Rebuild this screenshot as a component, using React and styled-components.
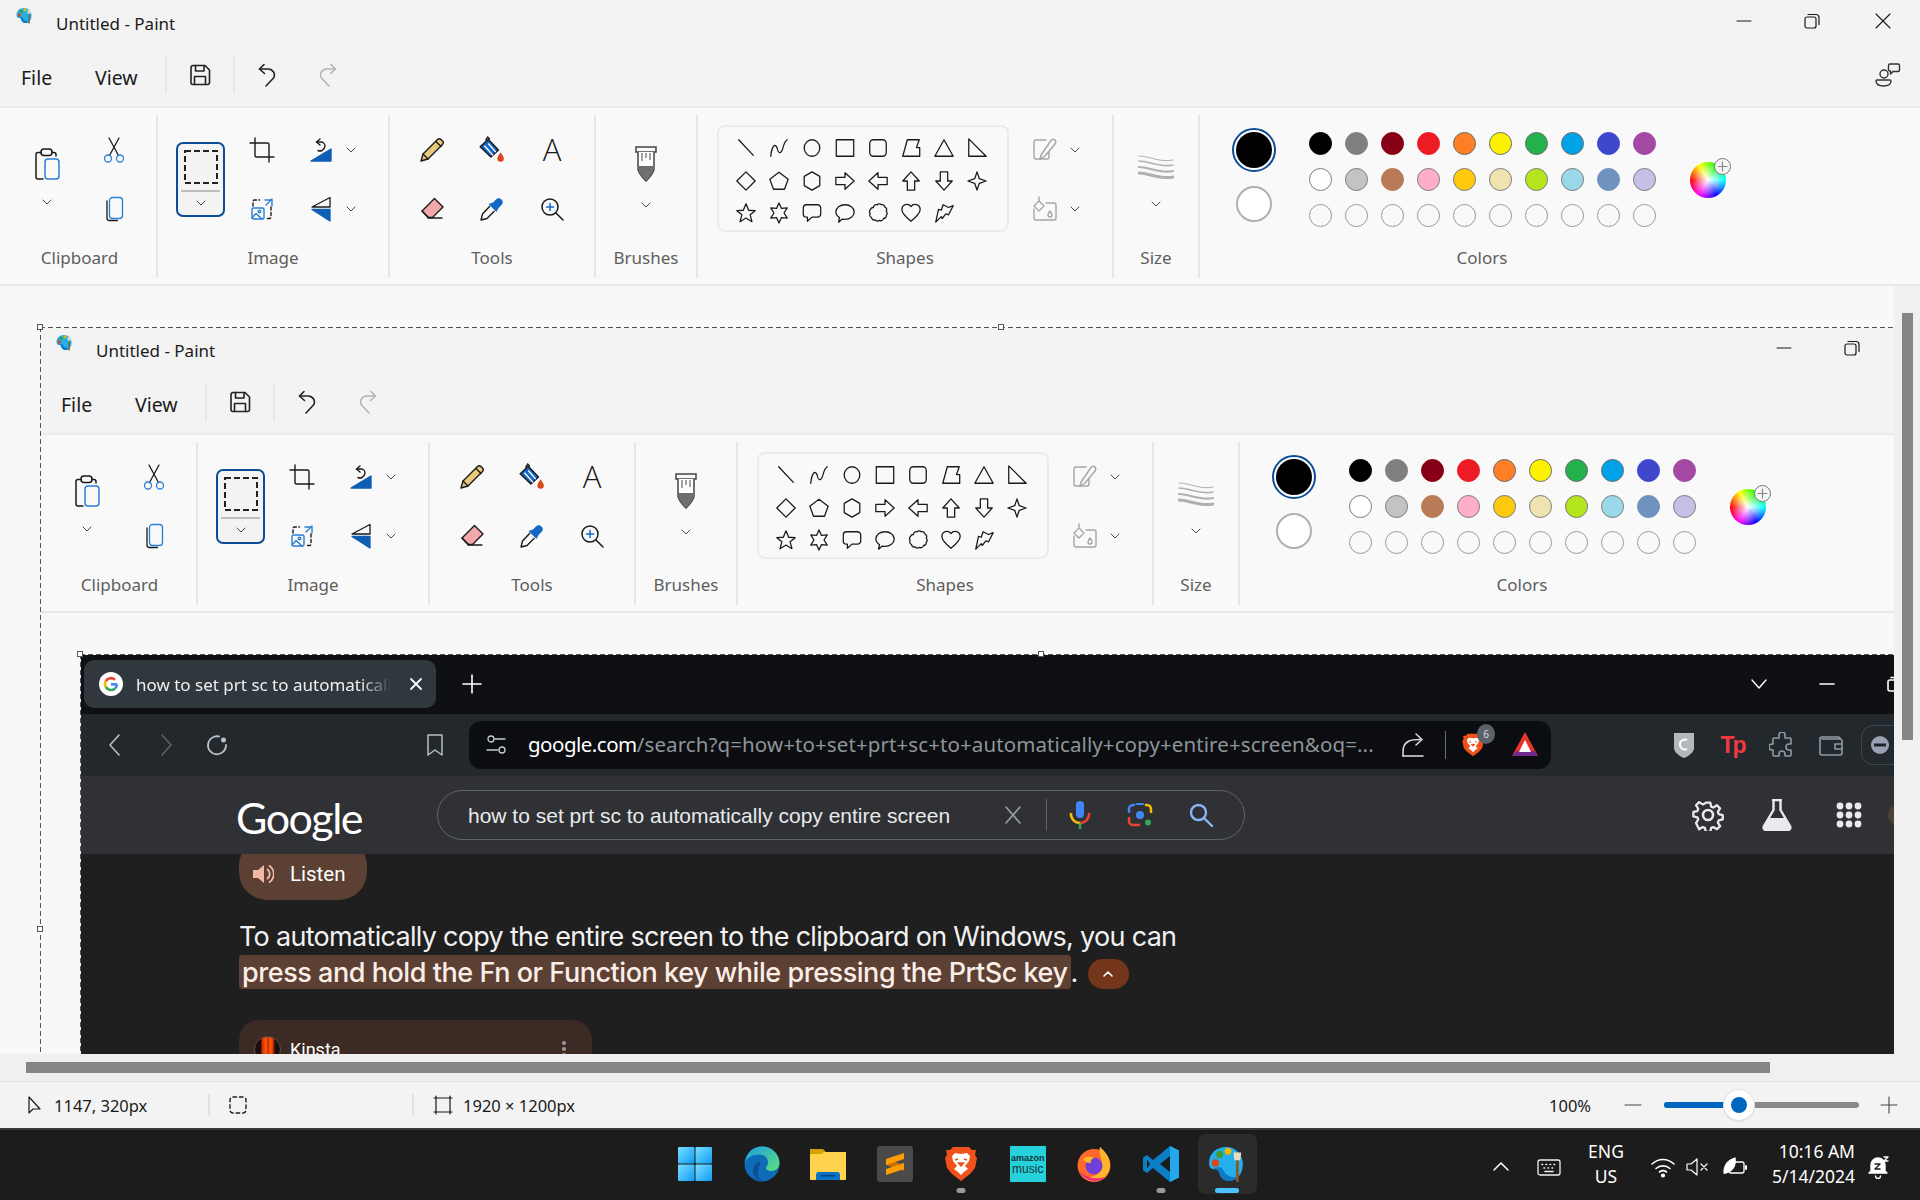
import React from "react";
import styled, { createGlobalStyle } from "styled-components";

const UI_FONT = `"Noto Sans", "Open Sans", sans-serif`;

const Global = createGlobalStyle`
  html, body {
    margin: 0;
    padding: 0;
    background: #f3f3f3;
    font-family: ${UI_FONT};
  }
  * { box-sizing: border-box; }
`;

const Page = styled.div`
  width: 1920px;
  height: 1200px;
  overflow: hidden;
  display: flex;
  flex-direction: column;
  background: #f3f3f3;
`;

/* ---------- paint chrome ---------- */

const ChromeWrap = styled.div`
  width: 1920px;
  height: 286px;
  flex: none;
  background: #f3f3f3;
`;

const TitleBar = styled.div`
  height: 46px;
  display: flex;
  align-items: center;
  padding-left: 16px;
`;

const TitleIcon = styled.div`
  width: 40px;
  height: 46px;
  padding-top: 7px;
`;

const TitleText = styled.span`
  font-size: 17px;
  color: #1a1a1a;
`;

const WindowButtons = styled.div`
  margin-left: auto;
  display: flex;
  height: 42px;
  align-self: flex-start;
`;

const WindowButton = styled.div`
  width: ${(p) => p.$w}px;
  display: flex;
  align-items: center;
  justify-content: center;
`;

const MenuBar = styled.div`
  height: 62px;
  display: flex;
  align-items: center;
  padding: 0 19px 0 21px;
`;

const MenuCell = styled.div`
  width: ${(p) => p.$w}px;
  font-size: 19.5px;
  color: #1a1a1a;
  display: flex;
  align-items: center;
  justify-content: ${(p) => (p.$text ? "flex-start" : "center")};
  margin-bottom: ${(p) => (p.$text ? 0 : 5)}px;
`;

const MenuSep = styled.div`
  width: 2px;
  height: 36px;
  margin-bottom: 4px;
  background: #e6e6e6;
`;

const CollabButton = styled.div`
  margin-left: auto;
  height: 26px;
  margin-bottom: 6px;
`;

const Ribbon = styled.div`
  height: 180px;
  display: flex;
  padding-top: 7px;
  background: #f9f9f9;
  border-top: 2px solid #ebebeb;
  border-bottom: 2px solid #e8e8e8;
  margin-top: -2px;
`;

const Group = styled.div`
  width: ${(p) => p.$w}px;
  height: 163px;
  display: flex;
  flex-direction: column;
  flex: none;
  border-right: ${(p) => (p.$last ? "none" : "2px solid #e6e6e6")};
`;

const GroupBody = styled.div`
  height: 124px;
  display: flex;
  gap: ${(p) => p.$gap || 0}px;
  padding: ${(p) => p.$top ?? 5}px 0 0 ${(p) => p.$left || 0}px;
  justify-content: ${(p) => p.$justify || "flex-start"};
`;

const GroupLabel = styled.div`
  text-align: center;
  font-size: 17px;
  line-height: 38px;
  color: #5e5e5e;
  padding-left: ${(p) => p.$nudge || 0}px;
`;

const ToolColumn = styled.div`
  width: 44px;
  display: flex;
  flex-direction: column;
`;

const ToolCell = styled.div`
  width: 44px;
  height: 59px;
  display: flex;
  align-items: center;
  justify-content: center;
`;

const ToolLetter = styled.span`
  font-family: "Open Sans", sans-serif;
  font-weight: 300;
  font-size: 31px;
  color: #1a1a1a;
  line-height: 1;
`;

const CaretRow = styled.div`
  height: 59px;
  display: flex;
  align-items: center;
  gap: 2px;
  margin-top: ${(p) => p.$lift || 0}px;
`;

const TallTool = styled.div`
  width: 44px;
  display: flex;
  flex-direction: column;
  align-items: center;
  padding-top: ${(p) => p.$pad || 28}px;
  gap: ${(p) => p.$gap || 16}px;
`;

const SelectButton = styled.div`
  width: 49px;
  height: 75px;
  margin-top: 22px;
  border: 2px solid #0b4d96;
  border-radius: 7px;
  background: #f3f3f3;
  display: flex;
  flex-direction: column;
  align-items: center;
`;

const SelectPreview = styled.div`
  height: 48px;
  display: flex;
  align-items: center;
  justify-content: center;
  border-bottom: 2px solid #bdbdbd;
  margin: 0 4px;
  width: 39px;
`;

const SelectCaret = styled.div`
  height: 22px;
  display: flex;
  align-items: center;
`;

const ShapeBox = styled.div`
  width: 292px;
  height: 107px;
  border: 2px solid #ececec;
  border-radius: 8px;
  padding: 5px 0 0 10px;
  display: grid;
  grid-template-columns: repeat(8, 33px);
  grid-auto-rows: 32.5px;
  align-items: center;
  justify-items: center;
`;

const ColorStack = styled.div`
  width: 44px;
  display: flex;
  flex-direction: column;
  align-items: center;
  gap: 14px;
  padding-top: 3px;
`;

const ActiveColor = styled.div`
  width: 44px;
  height: 44px;
  border-radius: 50%;
  border: 2px solid #0b4d96;
  padding: 2px;
  background: #fff;
  &::after {
    content: "";
    display: block;
    width: 100%;
    height: 100%;
    border-radius: 50%;
    background: #000;
  }
`;

const SecondColor = styled.div`
  width: 36px;
  height: 36px;
  border-radius: 50%;
  background: #fff;
  border: 2px solid #b0b0b0;
`;

const Palette = styled.div`
  display: grid;
  grid-template-columns: repeat(10, 36px);
  grid-auto-rows: 36px;
  align-items: center;
  justify-items: center;
`;

const Swatch = styled.div`
  width: 23px;
  height: 23px;
  border-radius: 50%;
  background: ${(p) => p.$c || "transparent"};
  border: 1.5px solid ${(p) => p.$ring || p.$c || "#999"};
`;

const ColorWheel = styled.div`
  position: relative;
  width: 36px;
  height: 36px;
  margin: 37px 0 0 2px;
  border-radius: 50%;
  background: radial-gradient(circle, #fff 0, rgba(255, 255, 255, 0) 68%),
    conic-gradient(from 270deg, #f00, #ff0, #0f0, #0ff, #00f, #f0f, #f00);
`;

const WheelPlus = styled.div`
  position: absolute;
  top: -4px;
  right: -5px;
  width: 17px;
  height: 17px;
  border-radius: 50%;
  background: #f5f5f5;
  border: 1.5px solid #777;
  display: flex;
  align-items: center;
  justify-content: center;
`;

/* ---------- canvas nesting ---------- */

const MainGrid = styled.div`
  height: 795px;
  flex: none;
  display: grid;
  grid-template-columns: 1894px 26px;
  grid-template-rows: 768px 27px;
  background: #f0f0f0;
`;

const Viewport = styled.div`
  overflow: hidden;
  background: #f8f8f8;
`;

const Workspace = styled.div`
  padding: 41px 0 0 40px;
  background: #f8f8f8;
`;

const Canvas = styled.div`
  position: relative;
  width: 1920px;
  background: #f8f8f8;
  &::before {
    content: "";
    position: absolute;
    inset: 0;
    z-index: 2;
    pointer-events: none;
    background:
      repeating-linear-gradient(90deg, #555 0 5px, #fff 5px 8px) top / 100% 1px no-repeat,
      repeating-linear-gradient(180deg, #555 0 5px, #fff 5px 8px) left / 1px 100% no-repeat;
  }
`;

const Handle = styled.div`
  position: absolute;
  z-index: 3;
  width: 6px;
  height: 6px;
  background: #fff;
  border: 1px solid #555;
  top: ${(p) => (p.$at === "left" ? 599 : -3)}px;
  left: ${(p) => (p.$at === "top" ? 958 : -3)}px;
`;

const VTrack = styled.div`
  padding: 27px 0 0 8px;
`;

const VThumb = styled.div`
  width: 11px;
  height: 427px;
  background: #868686;
`;

const HTrack = styled.div`
  padding: 8px 0 0 26px;
`;

const HThumb = styled.div`
  width: 1744px;
  height: 11px;
  background: #868686;
`;

/* ---------- browser screenshot ---------- */

const Browser = styled.div`
  width: 1920px;
  height: 546px;
  background: #1f1f1f;
  display: flex;
  flex-direction: column;
`;

const TabStrip = styled.div`
  height: 60px;
  flex: none;
  background: #0f1014;
  display: flex;
  align-items: center;
  padding: 0 71px 0 4px;
  color: #fff;
`;

const Tab = styled.div`
  width: 352px;
  height: 48px;
  border-radius: 10px;
  background: #30373d;
  display: flex;
  align-items: center;
  padding-left: 15px;
  flex: none;
`;

const TabTitle = styled.span`
  width: 255px;
  margin-left: 13px;
  font-size: 17px;
  color: #eef0f1;
  white-space: nowrap;
  overflow: hidden;
  mask-image: linear-gradient(90deg, #000 88%, transparent 100%);
`;

const TabClose = styled.div`
  margin-left: 18px;
  display: flex;
`;

const NewTab = styled.div`
  margin-left: 26px;
  display: flex;
`;

const StripRight = styled.div`
  margin-left: auto;
  display: flex;
`;

const StripCell = styled.div`
  width: 68px;
  display: flex;
  justify-content: center;
`;

const Toolbar = styled.div`
  height: 62px;
  flex: none;
  background: #23282c;
  display: flex;
  align-items: center;
  padding-left: 9px;
`;

const NavCell = styled.div`
  width: ${(p) => p.$w || 51}px;
  margin-left: ${(p) => p.$ml || 0}px;
  display: flex;
  justify-content: center;
  flex: none;
`;

const UrlPill = styled.div`
  width: 1082px;
  height: 48px;
  margin-left: 14px;
  flex: none;
  border-radius: 12px;
  background: #0c0d10;
  display: flex;
  align-items: center;
  padding-left: 15px;
`;

const UrlText = styled.div`
  width: 850px;
  margin-left: 20px;
  font-size: 20.5px;
  line-height: 26px;
  margin-bottom: 2px;
  letter-spacing: 0.1px;
  white-space: nowrap;
  color: #8e959b;
  flex: none;
`;

const UrlHost = styled.span`
  color: #fff;
  letter-spacing: -0.5px;
`;

const PillItem = styled.div`
  position: relative;
  margin-left: ${(p) => p.$ml}px;
  display: flex;
  flex: none;
`;

const PillSep = styled.div`
  width: 1px;
  height: 28px;
  margin-left: 18px;
  background: #6a6f74;
`;

const BraveBadge = styled.div`
  position: absolute;
  top: -9px;
  right: -10px;
  width: 18px;
  height: 20px;
  border-radius: 50%;
  background: #5d6169;
  color: #d8dade;
  font-size: 10px;
  display: flex;
  align-items: center;
  justify-content: center;
`;

const TpMark = styled.span`
  font-family: "Liberation Sans", sans-serif;
  font-weight: 700;
  font-size: 23px;
  letter-spacing: -2px;
  color: #ef3b3f;
  line-height: 1;
`;

const ProfilePill = styled.div`
  width: 80px;
  height: 40px;
  margin-left: 6px;
  flex: none;
  border: 1.5px solid #3b454d;
  border-radius: 12px;
  display: flex;
  align-items: center;
  padding-left: 9px;
  gap: 6px;
`;

const GoogleBar = styled.div`
  height: 78px;
  flex: none;
  background: #303134;
  display: flex;
  align-items: center;
  padding-left: 156px;
`;

const GoogleLogo = styled.div`
  width: 126px;
  flex: none;
  font-family: Lato, sans-serif;
  font-size: 43px;
  line-height: 1;
  letter-spacing: -1.5px;
  color: #fff;
  margin-top: 4px;
`;

const SearchPill = styled.div`
  width: 808px;
  height: 50px;
  margin-left: 75px;
  flex: none;
  border: 1px solid #5f6368;
  border-radius: 25px;
  display: flex;
  align-items: center;
  padding-left: 30px;
`;

const SearchText = styled.div`
  width: 512px;
  flex: none;
  padding-top: 2px;
  font-family: "Liberation Sans", sans-serif;
  font-size: 21px;
  color: #e8eaed;
  white-space: nowrap;
`;

const SearchSlot = styled.div`
  width: ${(p) => p.$w}px;
  display: flex;
  justify-content: center;
  flex: none;
`;

const SearchSep = styled.div`
  width: 1px;
  height: 32px;
  background: #5f6368;
`;

const BarCell = styled.div`
  width: ${(p) => p.$w}px;
  margin-left: ${(p) => p.$ml || 0}px;
  display: flex;
  justify-content: center;
  flex: none;
`;

const Avatar = styled.div`
  width: 20px;
  height: 20px;
  margin-left: 6px;
  flex: none;
  border-radius: 50%;
  background: #4a4334;
`;

const ResultBody = styled.div`
  flex: 1;
  overflow: hidden;
  background: #1f1f1f;
  padding-left: 159px;
`;

const ListenPill = styled.div`
  width: 128px;
  height: 62px;
  margin-top: -16px;
  border-radius: 28px;
  background: #5c4033;
  display: flex;
  align-items: center;
  padding: 10px 0 0 13px;
  gap: 16px;
  font-family: Roboto, sans-serif;
  font-size: 20.5px;
  color: #fff;
`;

const Answer = styled.div`
  margin-top: 19px;
  font-family: Inter, sans-serif;
  font-size: 27px;
  letter-spacing: -0.7px;
  line-height: 36px;
  color: #f1f1f1;
  white-space: nowrap;
`;

const AnswerLine = styled.div`
  display: flex;
  align-items: flex-start;
`;

const Mark = styled.span`
  height: 34px;
  line-height: 36px;
  padding: 0 3px;
  border-radius: 3px;
  background: #5c4033;
  color: #fbeee8;
  font-weight: 500;
  letter-spacing: -0.45px;
`;

const CollapsePill = styled.div`
  width: 41px;
  height: 30px;
  margin: 4px 0 0 10px;
  border-radius: 15px;
  background: #74361a;
  display: flex;
  align-items: center;
  justify-content: center;
`;

const SourceCard = styled.div`
  width: 353px;
  height: 100px;
  margin-top: 29px;
  border-radius: 20px;
  background: #3c2b25;
  display: flex;
  align-items: flex-start;
  padding: 16px 26px 0 15px;
  gap: 9px;
  font-family: Roboto, sans-serif;
  font-size: 18px;
  line-height: 28px;
  color: #fff;
`;

const KinstaDot = styled.div`
  width: 27px;
  height: 27px;
  border-radius: 50%;
  border: 1px solid #5a4a42;
  background: linear-gradient(90deg, #1c0f0c 22%, #d8300a 30%, #ff5a00 45%, #c2260a 52%, #ff5a00 62%, #d8300a 72%, #1c0f0c 80%);
`;

const MoreDots = styled.div`
  margin-left: auto;
  display: flex;
  height: 24px;
  align-items: center;
`;

/* ---------- status bar ---------- */

const StatusBar = styled.div`
  height: 47px;
  flex: none;
  border-top: 1px solid #e6e6e6;
  background: #f3f3f3;
  display: flex;
  align-items: center;
  font-size: 16.5px;
  color: #1a1a1a;
`;

const StatusSection = styled.div`
  width: ${(p) => p.$w}px;
  height: 22px;
  display: flex;
  align-items: center;
  gap: ${(p) => p.$gap || 0}px;
  padding-left: ${(p) => p.$left}px;
  border-right: ${(p) => (p.$sep ? "2px solid #e2e2e2" : "none")};
  flex: none;
`;

const ZoomArea = styled.div`
  margin-left: auto;
  display: flex;
  align-items: center;
  padding-right: 1px;
`;

const ZoomText = styled.span`
  width: 70px;
`;

const ZoomButton = styled.div`
  width: ${(p) => p.$w}px;
  display: flex;
  justify-content: center;
`;

const SliderTrack = styled.div`
  position: relative;
  width: 195px;
  height: 6px;
  margin-left: 17px;
  border-radius: 3px;
  background: #8a8a8a;
`;

const SliderFill = styled.div`
  width: 75px;
  height: 6px;
  border-radius: 3px;
  background: #0067c0;
`;

const SliderThumb = styled.div`
  position: absolute;
  left: 60px;
  top: -12px;
  width: 30px;
  height: 30px;
  border-radius: 50%;
  border: 7px solid #fff;
  background: #0067c0;
  box-shadow: 0 0 0 1px #e2e2e2, 0 1px 2px rgba(0, 0, 0, 0.2);
`;

/* ---------- taskbar ---------- */

const Taskbar = styled.div`
  height: 72px;
  flex: none;
  background: #1c1c1c;
  border-top: 2px solid #3a3a3a;
  display: flex;
  padding: 4px 19px 0 662px;
  color: #fff;
`;

const TaskCell = styled.div`
  width: 66.5px;
  height: 60px;
  display: flex;
  justify-content: center;
`;

const TaskButton = styled.div`
  position: relative;
  width: 59px;
  height: 60px;
  border-radius: 7px;
  background: ${(p) => (p.$active ? "#2b2b2b" : "transparent")};
  display: flex;
  align-items: center;
  justify-content: center;
`;

const TaskDot = styled.div`
  position: absolute;
  left: 50%;
  bottom: 1px;
  transform: translateX(-50%);
  width: ${(p) => (p.$active ? 24 : 9)}px;
  height: 5px;
  border-radius: 3px;
  background: ${(p) => (p.$active ? "#4cc2ff" : "#9a9a9a")};
`;

const AmazonTile = styled.div`
  width: 36px;
  height: 36px;
  background: #25d1da;
  display: flex;
  flex-direction: column;
  align-items: center;
  justify-content: center;
  color: #15333b;
  font-family: "Liberation Sans", sans-serif;
  font-size: 9px;
  font-weight: 700;
  line-height: 10px;
`;

const AmazonMusic = styled.span`
  font-size: 12px;
  font-weight: 400;
  line-height: 12px;
`;

const Tray = styled.div`
  margin-left: auto;
  display: flex;
  height: 66px;
  align-items: center;
`;

const TrayCell = styled.div`
  width: ${(p) => p.$w}px;
  display: flex;
  flex-direction: column;
  align-items: ${(p) => (p.$right ? "flex-end" : "center")};
  font-size: 17.5px;
  line-height: 24.5px;
  margin-bottom: ${(p) => (p.$lift ? 7 : 0)}px;
  flex: none;
  white-space: nowrap;
`;

/* ---------- icons ---------- */

const Ico = ({ s = 24, h, sw = 1.4, c = "#1a1a1a", vb = "0 0 24 24", children }) => (
  <svg
    width={s}
    height={h || s}
    viewBox={vb}
    fill="none"
    stroke={c}
    strokeWidth={sw}
    strokeLinecap="round"
    strokeLinejoin="round"
    aria-hidden="true"
  >
    {children}
  </svg>
);

const Caret = ({ c = "#4a4a4a", s = 12 }) => (
  <Ico s={s} vb="0 0 12 12" c={c} sw={1}>
    <path d="M2 4l4 4 4-4" />
  </Ico>
);

const PaletteIcon = ({ s = 36 }) => (
  <svg width={s} height={s} viewBox="0 0 36 36" aria-hidden="true">
    <path
      d="M17 2C8 2 1 8 1 17c0 4 2 6 5 6 3 0 4 1 5 4 1 4 4 7 9 7 8 0 13-7 13-16C33 9 26 2 17 2z"
      fill="#24aeea"
    />
    <path d="M4 22c3 1 6 0 7 4 1 5 4 8 9 8 4 0 7-2 9-4-8 2-13-2-15-7-1-3-6-2-10-1z" fill="#0b78c9" />
    <circle cx="7" cy="17" r="3.600" fill="#d9481c" />
    <circle cx="11" cy="9" r="3.400" fill="#3d9a35" />
    <circle cx="19" cy="6" r="3.200" fill="#f3b700" />
    <rect x="26.500" y="14" width="2.600" height="21" fill="#8a5a22" />
    <path d="M24 7h7.500l-1 7.500h-5.500z" fill="#e8dcc0" />
  </svg>
);

const CollabIcon = () => (
  <Ico s={26} vb="0 0 26 26" c="#333" sw={1.4}>
    <circle cx="9" cy="13" r="4" />
    <path d="M2 19h13c1 0 1 1 1 1 0 3-3 5-7.500 5S1 23 1 20c0 0 0-1 1-1z" />
    <path d="M15 3h8a1.500 1.500 0 0 1 1.500 1.500V9a1.500 1.500 0 0 1-1.500 1.500h-5L15.500 13v-3A1.500 1.500 0 0 1 13.500 9V4.500A1.500 1.500 0 0 1 15 3z" />
  </Ico>
);

const SaveIcon = () => (
  <Ico s={22} vb="0 0 22 22" sw={1.6} c="#222">
    <path d="M4 1.500h12l4.500 4.500v12.500a2 2 0 0 1-2 2H4a2 2 0 0 1-2-2v-15a2 2 0 0 1 2-2z" />
    <path d="M6.500 1.500v5.500h8.500V1.500" />
    <path d="M5.500 20.500V12.500h11v8" />
  </Ico>
);

const UndoIcon = ({ c = "#222", flip }) => (
  <Ico s={24} c={c} sw={1.6}>
    <g transform={flip ? "matrix(-1 0 0 1 24 0)" : undefined}>
      <path d="M8 1.500L3.500 6l5 4.500" />
      <path d="M3.500 6H12c5 0 8 5 5.500 9L10 23" />
    </g>
  </Ico>
);

const PasteIcon = () => (
  <Ico s={32} vb="0 0 32 32" sw={1.5}>
    <path d="M12 31H7a2 2 0 0 1-2-2V6.500a2 2 0 0 1 2-2h3M21 4.500h2a2 2 0 0 1 2 2V8" />
    <rect x="10" y="1" width="11" height="6.500" rx="3" />
    <rect x="14" y="11" width="14" height="20" rx="3" stroke="#2a7fd4" />
  </Ico>
);

const CutIcon = () => (
  <Ico s={26} vb="0 0 26 26" sw={1.3}>
    <path d="M8.500 18.500L18 1M17.500 18.500L8 1" />
    <circle cx="7" cy="21.500" r="3.500" stroke="#2a7fd4" />
    <circle cx="19" cy="21.500" r="3.500" stroke="#2a7fd4" />
  </Ico>
);

const CopyIcon = () => (
  <Ico s={26} vb="0 0 26 26" sw={1.3}>
    <path d="M6 5v17c0 1.500 1 2.500 2.500 2.500h8" />
    <rect x="8.500" y="1.500" width="13" height="21" rx="3" stroke="#2a7fd4" />
  </Ico>
);

const CropIcon = () => (
  <Ico s={26} vb="0 0 26 26" sw={1.4}>
    <path d="M6 1v17.500a1.500 1.500 0 0 0 1.500 1.500H25" />
    <path d="M20 25V7.500A1.500 1.500 0 0 0 18.500 6H1" />
  </Ico>
);

const RotateIcon = () => (
  <Ico s={24} sw={1.4}>
    <path d="M2 23L22 11V23z" fill="#0f5fb5" stroke="#0f5fb5" />
    <path d="M11 1L7.500 4l3.500 3" />
    <path d="M7.500 4H12a4 4 0 0 1 4 4c0 2-1 3-3 4.500-2 1-4 0-4 0" />
  </Ico>
);

const ResizeIcon = () => (
  <Ico s={24} sw={1.4}>
    <path d="M3 9V4.500A1.500 1.500 0 0 1 4.500 3h5" strokeDasharray="3 2.500" />
    <path d="M21 10v10a1.500 1.500 0 0 1-1.500 1.500H17" strokeDasharray="3 2.500" />
    <path d="M15 3h7v6M22 2l-6 6" stroke="#2a7fd4" />
    <rect x="2" y="11" width="12" height="11" rx="1.500" stroke="#2a7fd4" />
    <circle cx="9.500" cy="14.500" r="1.300" stroke="#2a7fd4" />
    <path d="M2 21l4-4.500 6 5.500" stroke="#2a7fd4" />
  </Ico>
);

const FlipIcon = () => (
  <Ico s={22} h={26} vb="0 0 22 26" sw={1.3}>
    <path d="M20 1.500V11H2z" />
    <path d="M2 13.500h18V25z" fill="#0f5fb5" stroke="#0f5fb5" />
  </Ico>
);

const PencilIcon = () => (
  <Ico s={26} vb="0 0 26 26" sw={1.4}>
    <path d="M2 24l2-7L18.500 2.500a2.500 2.500 0 0 1 3.500 0l1.500 1.500a2.500 2.500 0 0 1 0 3.500L9 22z" fill="#e9c77b" />
    <path d="M17 4.500l5 5M4 17l5 5" />
  </Ico>
);

const FillIcon = () => (
  <svg width="28" height="28" viewBox="0 0 26 26" aria-hidden="true">
    <path d="M2 10L9.500 3l9.500 10-7 6.500z" fill="#1268c4" stroke="#1a1a1a" strokeWidth="1.300" strokeLinejoin="round" />
    <path d="M6 9l8 9M9.500 7l7 8" stroke="#fff" strokeWidth="1.300" />
    <path d="M7 4L9 1l2 2" fill="none" stroke="#1a1a1a" strokeWidth="1.300" />
    <path d="M21 15c2 3 3 4.500 3 6a3 3 0 0 1-6 0c0-1.500 1-3 3-6z" fill="#d9481c" />
  </svg>
);

const EraserIcon = () => (
  <Ico s={26} vb="0 0 26 26" sw={1.4}>
    <path d="M3 15L15.500 2.500 24 11 13.500 21.500H9z" fill="#f2a8aa" />
    <path d="M3 15l7 7M9 22h14" />
  </Ico>
);

const PickerIcon = () => (
  <svg width="26" height="26" viewBox="0 0 26 26" aria-hidden="true">
    <path d="M11 10L3.500 18 2 24l6-1.500L15.500 15" fill="none" stroke="#1a1a1a" strokeWidth="1.400" strokeLinejoin="round" />
    <path d="M9.500 8l8 8 2-4 3-3c2-2 1.500-4 0-5.500s-3.500-2-5.500 0l-3 3z" fill="#1268c4" />
  </svg>
);

const MagnifierIcon = () => (
  <Ico s={24} sw={1.5}>
    <circle cx="10" cy="10" r="8" />
    <path d="M16 16l7 7" />
    <path d="M10 6.500v7M6.500 10h7" stroke="#1268c4" />
  </Ico>
);

const BrushIcon = () => (
  <svg width="22" height="36" viewBox="0 0 22 36" aria-hidden="true">
    <path d="M1 1h20v5H1z" fill="none" stroke="#444" strokeWidth="1.500" />
    <path d="M3 6v17c0 4 5 9 8 12 3-3 8-8 8-12V6" fill="#fff" stroke="#444" strokeWidth="1.500" />
    <path d="M3.700 20h14.600v3c0 4-4 8-7.300 11-3.300-3-7.300-7-7.300-11z" fill="#6f6f6f" />
    <path d="M7 7v8M11 7v5M15 7v7" stroke="#666" strokeWidth="1.200" />
  </svg>
);

const DashedSelect = () => (
  <svg width="34" height="34" viewBox="0 0 34 34" aria-hidden="true">
    <rect x="1" y="1" width="32" height="32" fill="none" stroke="#222" strokeWidth="2" strokeDasharray="6 3" />
  </svg>
);

const OutlineIcon = () => (
  <Ico s={26} vb="0 0 26 26" c="#a5a5a5" sw={1.4}>
    <path d="M14 3H4a2 2 0 0 0-2 2v15a2 2 0 0 0 2 2h11a2 2 0 0 0 2-2v-8" />
    <path d="M8 22l1-4L19 3.500c1.500-1.500 3-1.500 4-.5s1 2.500 0 4L13 19z" fill="#f9f9f9" />
  </Ico>
);

const FillShapeIcon = () => (
  <Ico s={26} vb="0 0 26 26" c="#a5a5a5" sw={1.4}>
    <path d="M14 7h8a2 2 0 0 1 2 2v13a2 2 0 0 1-2 2H4a2 2 0 0 1-2-2V13" />
    <path d="M2 10l5-5 5 5-5 5zM7 1v4" />
    <path d="M18 15c1.500 2 2 3 2 4a2 2 0 0 1-4 0c0-1 .5-2 2-4z" />
  </Ico>
);

const SizeIcon = () => (
  <Ico s={36} h={28} vb="0 0 36 28" c="#b0b0b0" sw={1}>
    <path d="M1 3c10 0 22 7 34 4" strokeWidth="1" />
    <path d="M1 8c10 0 22 7 34 4" strokeWidth="1.600" />
    <path d="M1 14c10 0 22 7 34 4" strokeWidth="2.200" />
    <path d="M1 20c10 0 22 7 34 4" strokeWidth="3" />
  </Ico>
);

const SHAPE_PATHS = [
  "M4 3l16 17",
  "M3 21C4 10 8 6 10 12c1 6 4 7 6 1 1-4 3-9 5-10",
  "M12 3c4.700 0 8.500 4 8.500 9s-3.800 9-8.500 9-8.500-4-8.500-9 3.800-9 8.500-9z",
  "M2.500 3h19v18h-19z",
  "M7 3h10a4 4 0 0 1 4 4v10a4 4 0 0 1-4 4H7a4 4 0 0 1-4-4V7a4 4 0 0 1 4-4z",
  "M8 3h13l-3 8.500h3.500V21H3z",
  "M12 3l10 18H2z",
  "M3 2v19h19z",
  "M12 2l10 10-10 10L2 12z",
  "M12 2.500L22 10l-4 11H6L2 10z",
  "M12 2l8.500 5v10L12 22l-8.500-5V7z",
  "M2 8h10V3l10 9-10 9v-5H2z",
  "M22 8H12V3L2 12l10 9v-5h10z",
  "M12 2l9 10h-5v10H8V12H3z",
  "M8 2h8v10h5l-9 10-9-10h5z",
  "M12 2l2.500 7.500L22 12l-7.500 2.500L12 22l-2.500-7.500L2 12l7.500-2.500z",
  "M12 2l2.900 7 7.100.5-5.500 4.500 2 7.500-6.500-4-6.500 4 2-7.500L2 9.500 9.100 9z",
  "M12 1l2.700 6 6.300-.5-3.500 5.500 3.500 5.500-6.300-.5L12 23l-2.700-6-6.300.5L6.500 12 3 6.500l6.300.5z",
  "M6 3h12a3.500 3.500 0 0 1 3.500 3.500V13a3.500 3.500 0 0 1-3.500 3.500h-6L7 21v-4.500H6A3.500 3.500 0 0 1 2.500 13V6.500A3.500 3.500 0 0 1 6 3z",
  "M12 3c5.500 0 10 3.300 10 8s-4.500 8-10 8c-1 0-2-.1-3-.4L5 22l1-5c-2.500-1.500-4-3.700-4-6 0-4.700 4.500-8 10-8z",
  "M7 6a3 3 0 0 1 4-3 3 3 0 0 1 4.500 0 3 3 0 0 1 4 2.500 3 3 0 0 1 1.500 4.500 3 3 0 0 1 0 4.500 3 3 0 0 1-3 3.500 3 3 0 0 1-4.500 2 3 3 0 0 1-4.500-.5 3 3 0 0 1-4-2.500 3 3 0 0 1-1.500-4.500 3 3 0 0 1 .5-4.500A3 3 0 0 1 7 6z",
  "M12 21C5 15.500 2 12 2 8a5.500 5.500 0 0 1 10-3 5.500 5.500 0 0 1 10 3c0 4-3 7.500-10 13z",
  "M11 3L9 9 6 8 3 22l6-6 1 2 4-5 3 1 5-10-5 2z",
];

const ROW_ONE = ["#000000", "#7f7f7f", "#880015", "#ed1c24", "#ff7f27", "#fff200", "#22b14c", "#00a2e8", "#3f48cc", "#a349a4"];
const ROW_TWO = ["#ffffff", "#c3c3c3", "#b97a57", "#ffaec9", "#ffc90e", "#efe4b0", "#b5e61d", "#99d9ea", "#7092be", "#c8bfe7"];
const RING_COLORS = ["#ff7f27", "#fff200", "#22b14c", "#00a2e8", "#ffffff", "#c3c3c3", "#ffaec9", "#ffc90e", "#efe4b0", "#b5e61d", "#99d9ea", "#c8bfe7"];

const ToolWithCaret = ({ children, lift }) => (
  <CaretRow $lift={lift}>
    <ToolCell>{children}</ToolCell>
    <Caret />
  </CaretRow>
);

const PaintChrome = ({ collab }) => (
  <ChromeWrap>
    <TitleBar>
      <TitleIcon>
        <PaletteIcon s={17} />
      </TitleIcon>
      <TitleText>Untitled - Paint</TitleText>
      <WindowButtons>
        <WindowButton $w={68}>
          <Ico s={16} vb="0 0 16 16" sw={1}><path d="M1 8h14" /></Ico>
        </WindowButton>
        <WindowButton $w={68}>
          <Ico s={16} vb="0 0 16 16" sw={1.2}>
            <rect x="1" y="4" width="11" height="11" rx="2" />
            <path d="M4 1.500h8a3 3 0 0 1 3 3v7" />
          </Ico>
        </WindowButton>
        <WindowButton $w={74}>
          <Ico s={16} vb="0 0 16 16" sw={1.1}><path d="M1 1l14 14M15 1L1 15" /></Ico>
        </WindowButton>
      </WindowButtons>
    </TitleBar>
    <MenuBar>
      <MenuCell $w={74} $text>File</MenuCell>
      <MenuCell $w={70} $text>View</MenuCell>
      <MenuSep />
      <MenuCell $w={66}><SaveIcon /></MenuCell>
      <MenuSep />
      <MenuCell $w={65}><UndoIcon /></MenuCell>
      <MenuCell $w={53}><UndoIcon flip c="#b5b5b5" /></MenuCell>
      {collab && (
        <CollabButton>
          <CollabIcon />
        </CollabButton>
      )}
    </MenuBar>
    <Ribbon>
      <Group $w={158}>
        <GroupBody $left={25} $gap={23}>
          <TallTool>
            <PasteIcon />
            <Caret />
          </TallTool>
          <ToolColumn>
            <ToolCell><CutIcon /></ToolCell>
            <ToolCell><CopyIcon /></ToolCell>
          </ToolColumn>
        </GroupBody>
        <GroupLabel $nudge={3}>Clipboard</GroupLabel>
      </Group>
      <Group $w={232}>
        <GroupBody $left={18} $gap={15}>
          <SelectButton>
            <SelectPreview><DashedSelect /></SelectPreview>
            <SelectCaret><Caret /></SelectCaret>
          </SelectButton>
          <ToolColumn>
            <ToolCell><CropIcon /></ToolCell>
            <ToolCell><ResizeIcon /></ToolCell>
          </ToolColumn>
          <div>
            <ToolWithCaret><RotateIcon /></ToolWithCaret>
            <ToolWithCaret><FlipIcon /></ToolWithCaret>
          </div>
        </GroupBody>
        <GroupLabel>Image</GroupLabel>
      </Group>
      <Group $w={206}>
        <GroupBody $left={20} $gap={16}>
          <ToolColumn>
            <ToolCell><PencilIcon /></ToolCell>
            <ToolCell><EraserIcon /></ToolCell>
          </ToolColumn>
          <ToolColumn>
            <ToolCell><FillIcon /></ToolCell>
            <ToolCell><PickerIcon /></ToolCell>
          </ToolColumn>
          <ToolColumn>
            <ToolCell><ToolLetter>A</ToolLetter></ToolCell>
            <ToolCell><MagnifierIcon /></ToolCell>
          </ToolColumn>
        </GroupBody>
        <GroupLabel>Tools</GroupLabel>
      </Group>
      <Group $w={102}>
        <GroupBody $justify="center">
          <TallTool $pad={26} $gap={17}>
            <BrushIcon />
            <Caret />
          </TallTool>
        </GroupBody>
        <GroupLabel>Brushes</GroupLabel>
      </Group>
      <Group $w={416}>
        <GroupBody $left={19} $gap={14} $top={10}>
          <ShapeBox>
            {SHAPE_PATHS.map((d) => (
              <Ico key={d} s={22} sw={1.4}><path d={d} /></Ico>
            ))}
          </ShapeBox>
          <div>
            <ToolWithCaret lift={-5}><OutlineIcon /></ToolWithCaret>
            <ToolWithCaret><FillShapeIcon /></ToolWithCaret>
          </div>
        </GroupBody>
        <GroupLabel>Shapes</GroupLabel>
      </Group>
      <Group $w={86}>
        <GroupBody $justify="center">
          <TallTool $pad={33} $gap={17}>
            <SizeIcon />
            <Caret />
          </TallTool>
        </GroupBody>
        <GroupLabel>Size</GroupLabel>
      </Group>
      <Group $w={564} $last>
        <GroupBody $left={32} $top={10} $gap={26}>
          <ColorStack>
            <ActiveColor />
            <SecondColor />
          </ColorStack>
          <Palette>
            {ROW_ONE.map((c) => (
              <Swatch key={c} $c={c} $ring={RING_COLORS.includes(c) ? "#6b6b6b" : c} />
            ))}
            {ROW_TWO.map((c) => (
              <Swatch key={c} $c={c} $ring={RING_COLORS.includes(c) ? "#7a7a7a" : c} />
            ))}
            {ROW_ONE.map((c) => (
              <Swatch key={c} />
            ))}
          </Palette>
          <ColorWheel>
            <WheelPlus>
              <Ico s={11} vb="0 0 11 11" c="#888" sw={1.2}><path d="M5.500 1v9M1 5.500h9" /></Ico>
            </WheelPlus>
          </ColorWheel>
        </GroupBody>
        <GroupLabel>Colors</GroupLabel>
      </Group>
    </Ribbon>
  </ChromeWrap>
);

const GoogleG = ({ s = 24 }) => (
  <svg width={s} height={s} viewBox="0 0 24 24" aria-hidden="true">
    <circle cx="12" cy="12" r="12" fill="#fff" />
    <path d="M18 12.300H12" stroke="#4285f4" strokeWidth="2.600" fill="none" />
    <path d="M18 12.300a6 6 0 0 1-2 4.200" stroke="#4285f4" strokeWidth="2.600" fill="none" />
    <path d="M16 16.500A6 6 0 0 1 6.800 15" stroke="#34a853" strokeWidth="2.600" fill="none" />
    <path d="M6.800 15a6 6 0 0 1 0-6" stroke="#fbbc05" strokeWidth="2.600" fill="none" />
    <path d="M6.800 9A6 6 0 0 1 16 7.800" stroke="#ea4335" strokeWidth="2.600" fill="none" />
  </svg>
);

const BraveIcon = ({ s = 26 }) => (
  <svg width={s} height={s} viewBox="0 0 36 36" aria-hidden="true">
    <path d="M10 1h16l3 3h4l-1 5 2 3-2 10-5 6-9 7-9-7-5-6L2 12l2-3-1-5h4z" fill="#f1511b" />
    <path d="M18 8l-6-1-3 3 1 5 4 5-3 3 4 3 3 3 3-3 4-3-3-3 4-5 1-5-3-3z" fill="#fff" />
    <path d="M18 20l-2.500-3h5zM15 13l-3 1M21 13l3 1" stroke="#f1511b" strokeWidth="1.500" fill="#f1511b" />
  </svg>
);

const BatIcon = () => (
  <svg width="28" height="28" viewBox="0 0 28 28" aria-hidden="true">
    <path d="M14 1L27 25H1z" fill="#e8352a" />
    <path d="M1 25h26l-4-5H5z" fill="#6e2a8e" />
    <path d="M14 9l6 12H8z" fill="#fff" />
  </svg>
);

const BrowserView = () => (
  <Browser>
    <TabStrip>
      <Tab>
        <GoogleG />
        <TabTitle>how to set prt sc to automatically copy</TabTitle>
        <TabClose>
          <Ico s={14} vb="0 0 14 14" c="#fff" sw={1.8}><path d="M2 2l10 10M12 2L2 12" /></Ico>
        </TabClose>
      </Tab>
      <NewTab>
        <Ico s={20} vb="0 0 20 20" c="#fff" sw={1.6}><path d="M10 1v18M1 10h18" /></Ico>
      </NewTab>
      <StripRight>
        <StripCell>
          <Ico s={16} vb="0 0 16 16" c="#fff" sw={1.4}><path d="M1 4l7 8 7-8" /></Ico>
        </StripCell>
        <StripCell>
          <Ico s={16} vb="0 0 16 16" c="#fff" sw={1.6}><path d="M1 8h14" /></Ico>
        </StripCell>
        <StripCell>
          <Ico s={16} vb="0 0 16 16" c="#fff" sw={1.6}>
            <rect x="1" y="4" width="11" height="11" rx="2" />
            <path d="M4 1.500h8a3 3 0 0 1 3 3v7" />
          </Ico>
        </StripCell>
      </StripRight>
    </TabStrip>
    <Toolbar>
      <NavCell>
        <Ico s={24} c="#b7c0c6" sw={1.6}><path d="M16 2L7 12l9 10" /></Ico>
      </NavCell>
      <NavCell>
        <Ico s={24} c="#5a6369" sw={1.6}><path d="M8 2l9 10-9 10" /></Ico>
      </NavCell>
      <NavCell>
        <Ico s={24} c="#b7c0c6" sw={1.8}>
          <path d="M14 3.500A9 9 0 1 0 21 12" />
          <circle cx="18.500" cy="7" r="1.600" fill="#b7c0c6" />
        </Ico>
      </NavCell>
      <NavCell $w={40} $ml={173}>
        <Ico s={24} c="#b7c0c6" sw={1.5}><path d="M5 2h14v20l-7-5-7 5z" /></Ico>
      </NavCell>
      <UrlPill>
        <Ico s={24} c="#c6cbcf" sw={1.3}>
          <circle cx="7" cy="6" r="3" />
          <path d="M11 6h10M3 17h11" />
          <circle cx="18" cy="17" r="3" />
        </Ico>
        <UrlText>
          <UrlHost>google.com</UrlHost>
          /search?q=how+to+set+prt+sc+to+automatically+copy+entire+screen&amp;oq=...
        </UrlText>
        <PillItem $ml={23}>
          <Ico s={26} vb="0 0 26 26" c="#e0e0e0" sw={1.5}>
            <path d="M2 24c0-8 0-12 6-15 3-1.500 7-1.500 11-1.500" />
            <path d="M15 2l6 5.500-6 5.500" />
            <path d="M2 24h20" />
          </Ico>
        </PillItem>
        <PillSep />
        <PillItem $ml={15}>
          <BraveIcon s={24} />
          <BraveBadge>6</BraveBadge>
        </PillItem>
        <PillItem $ml={26}>
          <BatIcon />
        </PillItem>
      </UrlPill>
      <NavCell $w={49} $ml={108}>
        <svg width="24" height="28" viewBox="0 0 24 28" aria-hidden="true">
          <path d="M2 2h20v15c0 4-5 8-10 10C7 25 2 21 2 17z" fill="#b4b8bd" />
          <path d="M15 9a5 5 0 1 0 0 9" fill="none" stroke="#fff" strokeWidth="2" />
        </svg>
      </NavCell>
      <NavCell $w={49}>
        <TpMark>Tp</TpMark>
      </NavCell>
      <NavCell $w={49}>
        <Ico s={26} vb="0 0 26 26" c="#8f9ba3" sw={1.6}>
          <path d="M10 3a3 3 0 0 1 6 0v3h5a1 1 0 0 1 1 1v5h-2a3 3 0 0 0 0 6h2v5a1 1 0 0 1-1 1h-5v-2a3 3 0 0 0-6 0v2H5a1 1 0 0 1-1-1v-5h-1a3 3 0 0 1 0-6h1V7a1 1 0 0 1 1-1h5z" />
        </Ico>
      </NavCell>
      <NavCell $w={49}>
        <Ico s={26} vb="0 0 26 26" c="#8f9ba3" sw={1.6}>
          <path d="M4 5h16a2 2 0 0 1 2 2M4 5a2 2 0 0 0-2 2v14a2 2 0 0 0 2 2h18a2 2 0 0 0 2-2V9a2 2 0 0 0-2-2H4" />
          <path d="M24 12h-7v5h7" />
        </Ico>
      </NavCell>
      <ProfilePill>
        <svg width="18" height="18" viewBox="0 0 18 18" aria-hidden="true">
          <circle cx="9" cy="9" r="9" fill="#9b9fb4" />
          <rect x="3" y="7.500" width="12" height="3" fill="#1f2226" />
        </svg>
        <Ico s={10} vb="0 0 10 10" c="#b7c0c6" sw={1.6}><path d="M1 3l4 4 4-4" /></Ico>
      </ProfilePill>
    </Toolbar>
    <GoogleBar>
      <GoogleLogo>Google</GoogleLogo>
      <SearchPill>
        <SearchText>how to set prt sc to automatically copy entire screen</SearchText>
        <SearchSlot $w={66}>
          <Ico s={20} vb="0 0 20 20" c="#9aa0a6" sw={1.6}><path d="M3 2l14 16M17 2L3 18" /></Ico>
        </SearchSlot>
        <SearchSep />
        <SearchSlot $w={66}>
          <svg width="22" height="30" viewBox="0 0 22 30" aria-hidden="true">
            <rect x="7" y="1" width="8" height="17" rx="4" fill="#4285f4" />
            <path d="M2 13a9 9 0 0 0 9 10" fill="none" stroke="#fbbc05" strokeWidth="2.500" />
            <path d="M20 13a9 9 0 0 1-9 10" fill="none" stroke="#ea4335" strokeWidth="2.500" />
            <path d="M11 23v6" stroke="#34a853" strokeWidth="2.500" />
          </svg>
        </SearchSlot>
        <SearchSlot $w={54}>
          <svg width="26" height="26" viewBox="0 0 26 26" aria-hidden="true">
            <path d="M2 11V7a4 4 0 0 1 4-4h2" fill="none" stroke="#4285f4" strokeWidth="2.500" />
            <path d="M18 3h2a4 4 0 0 1 4 4v4" fill="none" stroke="#fbbc05" strokeWidth="2.500" />
            <path d="M2 15v4a4 4 0 0 0 4 4h7" fill="none" stroke="#ea4335" strokeWidth="2.500" />
            <path d="M8 3l2-2h6l2 2z" fill="#4285f4" />
            <circle cx="13" cy="13" r="4" fill="#4285f4" />
            <circle cx="21" cy="20.500" r="3" fill="#34a853" />
          </svg>
        </SearchSlot>
        <SearchSlot $w={68}>
          <Ico s={26} vb="0 0 26 26" c="#8ab4f8" sw={2.400}>
            <circle cx="10.500" cy="10.500" r="7.500" />
            <path d="M16 16l8 8" />
          </Ico>
        </SearchSlot>
      </SearchPill>
      <BarCell $w={60} $ml={433}>
        <Ico s={32} vb="0 0 32 32" c="#e8eaed" sw={2.600}>
          <circle cx="16" cy="16" r="5" />
          <path d="M13.500 2h5l1 4.500 2.500 1 4-2.500 3.500 3.500-2.500 4 1 2.500 4.500 1v5l-4.500 1-1 2.500 2.500 4-3.500 3.500-4-2.500-2.500 1-1 4.500h-5l-1-4.500-2.500-1-4 2.500L2.500 25l2.500-4-1-2.500L-.5 17.500v-5l4.500-1 1-2.500-2.500-4L6 1.500 10 4l2.500-1z" transform="translate(1.800 1.800) scale(.89)" />
        </Ico>
      </BarCell>
      <BarCell $w={78}>
        <svg width="30" height="32" viewBox="0 0 30 32" aria-hidden="true">
          <path d="M10 1h10M11.500 1v10L2 27c-1 2 0 4 2 4h22c2 0 3-2 2-4l-9.500-16V1" fill="none" stroke="#e8eaed" strokeWidth="2.400" />
          <path d="M7 19h16l5 9c.7 1.500 0 3-2 3H4c-2 0-2.700-1.500-2-3z" fill="#e8eaed" />
        </svg>
      </BarCell>
      <BarCell $w={66}>
        <svg width="26" height="26" viewBox="0 0 26 26" fill="#e8eaed" aria-hidden="true">
          {[4, 13, 22].flatMap((y) =>
            [4, 13, 22].map((x) => <circle key={`${x}-${y}`} cx={x} cy={y} r="3.400" />)
          )}
        </svg>
      </BarCell>
      <Avatar />
    </GoogleBar>
    <ResultBody>
      <ListenPill>
        <svg width="22" height="22" viewBox="0 0 22 22" aria-hidden="true">
          <path d="M1 7h5l6-5v18l-6-5H1z" fill="#f2b8a2" />
          <path d="M15 6a6 6 0 0 1 0 10M17 2.500a10 10 0 0 1 0 17" fill="none" stroke="#f2b8a2" strokeWidth="1.800" />
        </svg>
        Listen
      </ListenPill>
      <Answer>
        <div>To automatically copy the entire screen to the clipboard on Windows, you can</div>
        <AnswerLine>
          <Mark>press and hold the Fn or Function key while pressing the PrtSc key</Mark>
          <span>.</span>
          <CollapsePill>
            <Ico s={14} vb="0 0 14 14" c="#fff" sw={1.6}><path d="M3 9l4-4 4 4" /></Ico>
          </CollapsePill>
        </AnswerLine>
      </Answer>
      <SourceCard>
        <KinstaDot />
        Kinsta
        <MoreDots>
          <svg width="4" height="16" viewBox="0 0 4 16" fill="#9a9a9a" aria-hidden="true">
            <circle cx="2" cy="3" r="2" />
            <circle cx="2" cy="9" r="2" />
            <circle cx="2" cy="15" r="2" />
          </svg>
        </MoreDots>
      </SourceCard>
    </ResultBody>
  </Browser>
);

const WindowsLogo = () => (
  <svg width="36" height="36" viewBox="0 0 36 36" aria-hidden="true">
    <defs>
      <linearGradient id="winTile" x1="0" y1="0" x2="1" y2="1">
        <stop offset="0" stopColor="#79e0ff" />
        <stop offset="1" stopColor="#0f9bf5" />
      </linearGradient>
    </defs>
    <rect x="1" y="1" width="16.500" height="16.500" rx="1" fill="url(#winTile)" />
    <rect x="18.500" y="1" width="16.500" height="16.500" rx="1" fill="url(#winTile)" />
    <rect x="1" y="18.500" width="16.500" height="16.500" rx="1" fill="url(#winTile)" />
    <rect x="18.500" y="18.500" width="16.500" height="16.500" rx="1" fill="url(#winTile)" />
  </svg>
);

const EdgeLogo = () => (
  <svg width="36" height="36" viewBox="0 0 36 36" aria-hidden="true">
    <defs>
      <linearGradient id="edgeTop" x1="0" y1="0" x2="1" y2="1">
        <stop offset="0" stopColor="#1b9de2" />
        <stop offset="1" stopColor="#5fe07a" />
      </linearGradient>
    </defs>
    <circle cx="18" cy="18" r="17.500" fill="#0f6ab8" />
    <path d="M1 17C2 7 9 .5 18 .5 28 .5 35.500 8 35.500 17c0 5-4 8-8.500 8-3 0-5-1.500-5-3 0-1 2-2.500 2-5.500 0-5-4-8-8.500-8C8 8.500 2.500 12 1 17z" fill="url(#edgeTop)" />
    <path d="M17 16c-5 0-8 4-8 9s4 10 10 10c-5-2-6-7-5-11 .5-3 2-5 3-8z" fill="#0b4f96" />
  </svg>
);

const FolderLogo = () => (
  <svg width="36" height="36" viewBox="0 0 36 36" aria-hidden="true">
    <path d="M0 3h13l4 4h-4l-2 2H0z" fill="#d49f00" />
    <path d="M0 8h11l3-2h22v27a1 1 0 0 1-1 1H1a1 1 0 0 1-1-1z" fill="#ffd34e" />
    <path d="M6 34v-5a3 3 0 0 1 3-3h18a3 3 0 0 1 3 3v5z" fill="#0a72c6" />
    <rect x="11" y="29" width="14" height="1.500" fill="#063f73" />
  </svg>
);

const SublimeLogo = () => (
  <svg width="36" height="36" viewBox="0 0 36 36" aria-hidden="true">
    <rect width="36" height="36" rx="3" fill="#4a4a4a" />
    <path d="M9 13l18 6v6L9 19z" fill="#c97400" />
    <path d="M9 13l18-6v6L9 19z" fill="#ff9d00" />
    <path d="M9 23l18-6v6L9 29z" fill="#ff9d00" />
  </svg>
);

const FirefoxLogo = () => (
  <svg width="36" height="36" viewBox="0 0 36 36" aria-hidden="true">
    <circle cx="18" cy="19.500" r="16.500" fill="#ff6a2b" />
    <path d="M24 1c6 5 10 11 10 18 0 9-7 16-16 16-5 0-9-2-12-5 8 3 20 0 20-12 0-6-4-12-2-17z" fill="#ffb42b" />
    <path d="M3 25c3 6 9 10 15 10 4 0 8-1 11-4-8 3-19 1-26-6z" fill="#f02a7d" />
    <circle cx="18" cy="20" r="8.500" fill="#6f3fd8" />
    <path d="M7 13c3-3 7-3 11-1-3 1-4 3-3 5-4 0-7-1-8-4z" fill="#ffb42b" />
  </svg>
);

const VsCodeLogo = () => (
  <svg width="36" height="36" viewBox="0 0 36 36" aria-hidden="true">
    <path d="M27 0l9 4.500v27L27 36 10 22l-6 5-4-2.500V11.500L4 9l6 5z" fill="#0a7ec6" />
    <path d="M27 0l9 4.500v27L27 36z" fill="#26a6ec" />
    <path d="M27 10v16l-10-8z" fill="#1c1c1c" />
    <path d="M4 13.500L7 18l-3 4.500z" fill="#1c1c1c" />
  </svg>
);

const TASK_ICONS = [
  { key: "win", node: <WindowsLogo /> },
  { key: "edge", node: <EdgeLogo /> },
  { key: "folder", node: <FolderLogo /> },
  { key: "sublime", node: <SublimeLogo /> },
  { key: "brave", node: <BraveIcon s={36} />, dot: true },
  {
    key: "amazon",
    node: (
      <AmazonTile>
        amazon
        <AmazonMusic>music</AmazonMusic>
      </AmazonTile>
    ),
  },
  { key: "firefox", node: <FirefoxLogo /> },
  { key: "code", node: <VsCodeLogo />, dot: true },
  { key: "paint", node: <PaletteIcon s={38} />, active: true },
];

export default function App() {
  return (
    <Page>
      <Global />
      <PaintChrome collab />
      <MainGrid>
        <Viewport>
          <Workspace>
            <Canvas>
              <Handle />
              <Handle $at="top" />
              <Handle $at="left" />
              <PaintChrome />
              <Workspace>
                <Canvas>
                  <Handle />
                  <Handle $at="top" />
                  <BrowserView />
                </Canvas>
              </Workspace>
            </Canvas>
          </Workspace>
        </Viewport>
        <VTrack>
          <VThumb />
        </VTrack>
        <HTrack>
          <HThumb />
        </HTrack>
      </MainGrid>
      <StatusBar>
        <StatusSection $w={210} $left={26} $gap={10} $sep>
          <Ico s={18} vb="0 0 18 18" sw={1.2}><path d="M3 1v16l4-4h7z" /></Ico>
          1147, 320px
        </StatusSection>
        <StatusSection $w={204} $left={18} $sep>
          <Ico s={20} vb="0 0 20 20" sw={1.4}>
            <rect x="2" y="2" width="16" height="16" rx="3" strokeDasharray="3.500 3" />
          </Ico>
        </StatusSection>
        <StatusSection $w={200} $left={19} $gap={10}>
          <Ico s={20} vb="0 0 20 20" sw={1.2}>
            <rect x="3" y="3" width="14" height="14" />
            <path d="M1 3h2v-2M17 1v2h2M1 17h2v2M17 19v-2h2" />
          </Ico>
          1920 × 1200px
        </StatusSection>
        <ZoomArea>
          <ZoomText>100%</ZoomText>
          <ZoomButton $w={28}>
            <Ico s={18} vb="0 0 18 18" c="#444" sw={1.1}><path d="M1 9h16" /></Ico>
          </ZoomButton>
          <SliderTrack>
            <SliderFill />
            <SliderThumb />
          </SliderTrack>
          <ZoomButton $w={60}>
            <Ico s={18} vb="0 0 18 18" c="#444" sw={1.1}><path d="M1 9h16M9 1v16" /></Ico>
          </ZoomButton>
        </ZoomArea>
      </StatusBar>
      <Taskbar>
        {TASK_ICONS.map((icon) => (
          <TaskCell key={icon.key}>
            <TaskButton $active={icon.active}>
              {icon.node}
              {(icon.dot || icon.active) && <TaskDot $active={icon.active} />}
            </TaskButton>
          </TaskCell>
        ))}
        <Tray>
          <TrayCell $w={48}>
            <Ico s={18} vb="0 0 18 18" c="#fff" sw={1.5}><path d="M2 12l7-7 7 7" /></Ico>
          </TrayCell>
          <TrayCell $w={48}>
            <Ico s={24} vb="0 0 24 20" c="#f0f0f0" sw={1.3}>
              <rect x="1" y="3" width="22" height="15" rx="2" />
              <path d="M5 7.500h.6M9 7.500h.6M13 7.500h.6M17 7.500h.6M7 11h.6M11 11h.6M15 11h.6M8 14.500h8" strokeWidth="1.600" />
            </Ico>
          </TrayCell>
          <TrayCell $w={66} $lift>
            <span>ENG</span>
            <span>US</span>
          </TrayCell>
          <TrayCell $w={48}>
            <Ico s={26} vb="0 0 26 26" c="#fff" sw={1.6}>
              <path d="M2 10c6.500-6 15.500-6 22 0M6 14.500c4-3.500 10-3.500 14 0M9.500 18c2-1.500 5-1.500 7 0" />
              <circle cx="13" cy="21.500" r="1.300" fill="#fff" />
            </Ico>
          </TrayCell>
          <TrayCell $w={22}>
            <Ico s={24} vb="0 0 24 24" c="#fff" sw={1.2}>
              <path d="M1 9h4l6-5v16l-6-5H1z" />
              <path d="M15 9l6 6M21 9l-6 6" />
            </Ico>
          </TrayCell>
          <TrayCell $w={52}>
            <Ico s={26} vb="0 0 26 26" c="#fff" sw={1.3}>
              <rect x="7" y="8" width="15" height="11" rx="2" />
              <path d="M24 12v3" strokeWidth="2" />
              <path d="M2 19c0-8 4-13 11-15 1 7-1 12-9 15z" fill="#fff" />
            </Ico>
          </TrayCell>
          <TrayCell $w={94} $right $lift>
            <span>10:16 AM</span>
            <span>5/14/2024</span>
          </TrayCell>
          <TrayCell $w={46}>
            <Ico s={24} vb="0 0 24 24" c="#fff" sw={1.4}>
              <path d="M12 3a7 7 0 0 0-7 7v6l-2 2h18l-2-2v-6a7 7 0 0 0-7-7z" fill="#fff" />
              <path d="M9.500 21a2.500 2.500 0 0 0 5 0" />
              <path d="M9 9h5l-5 5h5" stroke="#1c1c1c" />
              <path d="M18 2h4l-4 4h4" />
            </Ico>
          </TrayCell>
        </Tray>
      </Taskbar>
    </Page>
  );
}
